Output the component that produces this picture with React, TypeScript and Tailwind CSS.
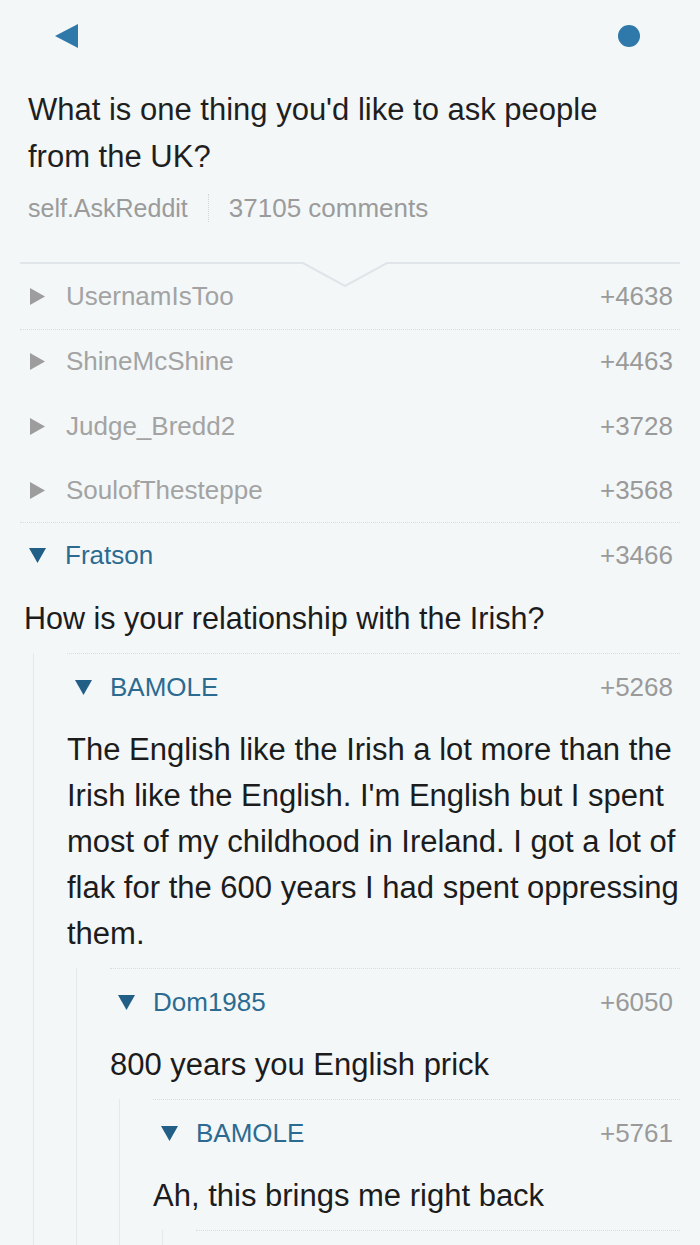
import React from 'react';

type Comment = {
  author: string;
  score: string;
  body: string;
  replies?: Comment[];
};

const COLLAPSED = [
  { author: 'UsernamIsToo', score: '+4638', dotted: true },
  { author: 'ShineMcShine', score: '+4463', dotted: false },
  { author: 'Judge_Bredd2', score: '+3728', dotted: false },
  { author: 'SoulofThesteppe', score: '+3568', dotted: true },
];

const THREAD: Comment[] = [
  {
    author: 'BAMOLE',
    score: '+5268',
    body: "The English like the Irish a lot more than the Irish like the English. I'm English but I spent most of my childhood in Ireland. I got a lot of flak for the 600 years I had spent oppressing them.",
    replies: [
      {
        author: 'Dom1985',
        score: '+6050',
        body: '800 years you English prick',
        replies: [
          {
            author: 'BAMOLE',
            score: '+5761',
            body: 'Ah, this brings me right back',
            replies: [],
          },
        ],
      },
    ],
  },
];

const font = { fontFamily: '"Liberation Sans", Arial, sans-serif' };

function RightTri() {
  return (
    <svg width="15" height="17" viewBox="0 0 15 17" className="shrink-0">
      <polygon points="0,0 15,8.5 0,17" fill="#9d9d9d" />
    </svg>
  );
}

function DownTri() {
  return (
    <svg width="17" height="15" viewBox="0 0 17 15" className="shrink-0">
      <polygon points="0,0 17,0 8.5,15" fill="#225f87" />
    </svg>
  );
}

function Reply({ c }: { c: Comment }) {
  return (
    <div>
      <div className="h-[68px] flex items-center justify-between border-t border-dotted border-[#d8dde0] pl-[8px] pr-[7px]">
        <div className="flex items-center gap-[18px]">
          <DownTri />
          <span className="text-[26px] text-[#2c6b91]">{c.author}</span>
        </div>
        <span className="text-[26px] text-[#9a9a9a]">{c.score}</span>
      </div>
      <p className="text-[31px] leading-[46px] text-[#1c1c1c] pt-[6px] pb-[11px]">{c.body}</p>
      {c.replies && (
        <div className="ml-[9px] border-l border-[#e4e9eb] pl-[33px]">
          {c.replies.map((r, i) => (
            <Reply key={i} c={r} />
          ))}
          {c.replies.length === 0 && <div className="h-[30px] border-t border-dotted border-[#d8dde0]" />}
        </div>
      )}
    </div>
  );
}

export default function App() {
  return (
    <div className="h-[1245px] overflow-hidden bg-[#f3f7f8] px-[20px]" style={font}>
      {/* Top bar */}
      <div className="h-[72px] flex items-center justify-between pl-[35px] pr-[40px]">
        <svg width="23" height="24" viewBox="0 0 23 24">
          <polygon points="23,0 23,24 0,12" fill="#2f78aa" />
        </svg>
        <div className="w-[22px] h-[22px] rounded-full bg-[#2f78aa]" />
      </div>

      {/* Title */}
      <h1 className="mt-[14px] pl-[8px] pr-[40px] text-[31px] leading-[47px] text-[#1f1f1f] font-normal">
        What is one thing you'd like to ask people from the UK?
      </h1>
      <div className="mt-[12px] pl-[8px] flex items-center text-[25px] leading-[32px] text-[#9b9b9b]">
        <span>self.AskReddit</span>
        <span className="mx-[20px] h-[28px] border-l border-dotted border-[#d0d6d9]" />
        <span className="text-[26px]">37105 comments</span>
      </div>

      {/* Divider with notch */}
      <div className="relative mt-[38px] h-[3px]">
        <svg className="absolute left-0 top-0" width="660" height="28" viewBox="0 0 660 28">
          <polyline
            points="0,1 283,1 325,24 367,1 660,1"
            fill="none"
            stroke="#dfe5e8"
            strokeWidth="2"
          />
        </svg>
      </div>

      {/* Collapsed comments */}
      {COLLAPSED.map((r, i) => (
        <div
          key={i}
          className={`h-[64.5px] flex items-center justify-between pl-[10px] pr-[7px] ${
            r.dotted ? 'border-b border-dotted border-[#d8dde0]' : ''
          }`}
        >
          <div className="flex items-center gap-[21px]">
            <RightTri />
            <span className="text-[26px] text-[#a3a3a3]">{r.author}</span>
          </div>
          <span className="text-[26px] text-[#9a9a9a]">{r.score}</span>
        </div>
      ))}

      {/* Expanded comment */}
      <div className="h-[64.5px] flex items-center justify-between pl-[9px] pr-[7px]">
        <div className="flex items-center gap-[19px]">
          <DownTri />
          <span className="text-[26px] text-[#2c6b91]">Fratson</span>
        </div>
        <span className="text-[26px] text-[#9a9a9a]">+3466</span>
      </div>
      <p className="pl-[4px] pt-[10px] pb-[15px] text-[30.5px] leading-[40px] text-[#1c1c1c]">
        How is your relationship with the Irish?
      </p>
      <div className="ml-[13px] border-l border-[#e4e9eb] pl-[33px]">
        {THREAD.map((c, i) => (
          <Reply key={i} c={c} />
        ))}
      </div>
    </div>
  );
}
